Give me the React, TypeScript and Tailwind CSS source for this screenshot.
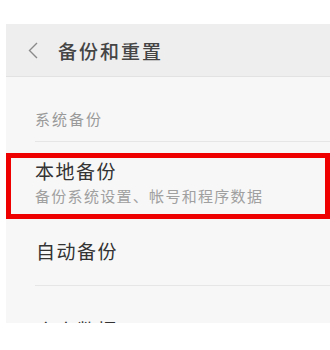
export default function App() {
  return (
    <div
      className="w-[330px] h-[350px] bg-white overflow-hidden"
      style={{ fontFamily: '"Noto Sans CJK SC", "Noto Sans", sans-serif' }}
    >
      <div className="ml-[6px] mt-[24px] h-[299px] overflow-hidden bg-[#f7f7f7]">
        {/* header */}
        <div className="h-[53px] bg-[#eeeeef] border-b border-[#e2e2e2] flex items-center">
          <svg width="12" height="17" viewBox="0 0 12 17" className="ml-[21px]">
            <path d="M10 1 L2.5 8.5 L10 16" fill="none" stroke="#8a8a8a" strokeWidth="1.4" />
          </svg>
          <span className="ml-[19px] text-[19px] leading-none font-medium text-[#454545] tracking-[2px]">备份和重置</span>
        </div>

        <div className="pl-[29px] pt-[33px] pb-[13px] text-[15px] leading-[18px] tracking-[2px] text-[#9a9a9a]">系统备份</div>
        <div className="ml-[29px] h-px bg-[#e6e6e6]"></div>

        <div className="mt-[11px] h-[66px] border-[5px] border-[#ee0000] pl-[24px] pt-[1px]">
          <div className="text-[19px] leading-[24px] tracking-[1.5px] text-[#333333]">本地备份</div>
          <div className="mt-[4px] text-[15px] leading-[18px] tracking-[1.3px] text-[#a0a0a0]">备份系统设置、帐号和程序数据</div>
        </div>

        <div className="h-[66px] pl-[30px] flex items-center pb-[3px]">
          <span className="text-[19px] leading-none tracking-[1.5px] text-[#333333]">自动备份</span>
        </div>
        <div className="ml-[29px] h-px bg-[#e6e6e6]"></div>

        <div className="pl-[30px] pt-[34px] text-[19px] leading-none tracking-[1.5px] text-[#333333]">个人数据</div>
      </div>
    </div>
  )
}
